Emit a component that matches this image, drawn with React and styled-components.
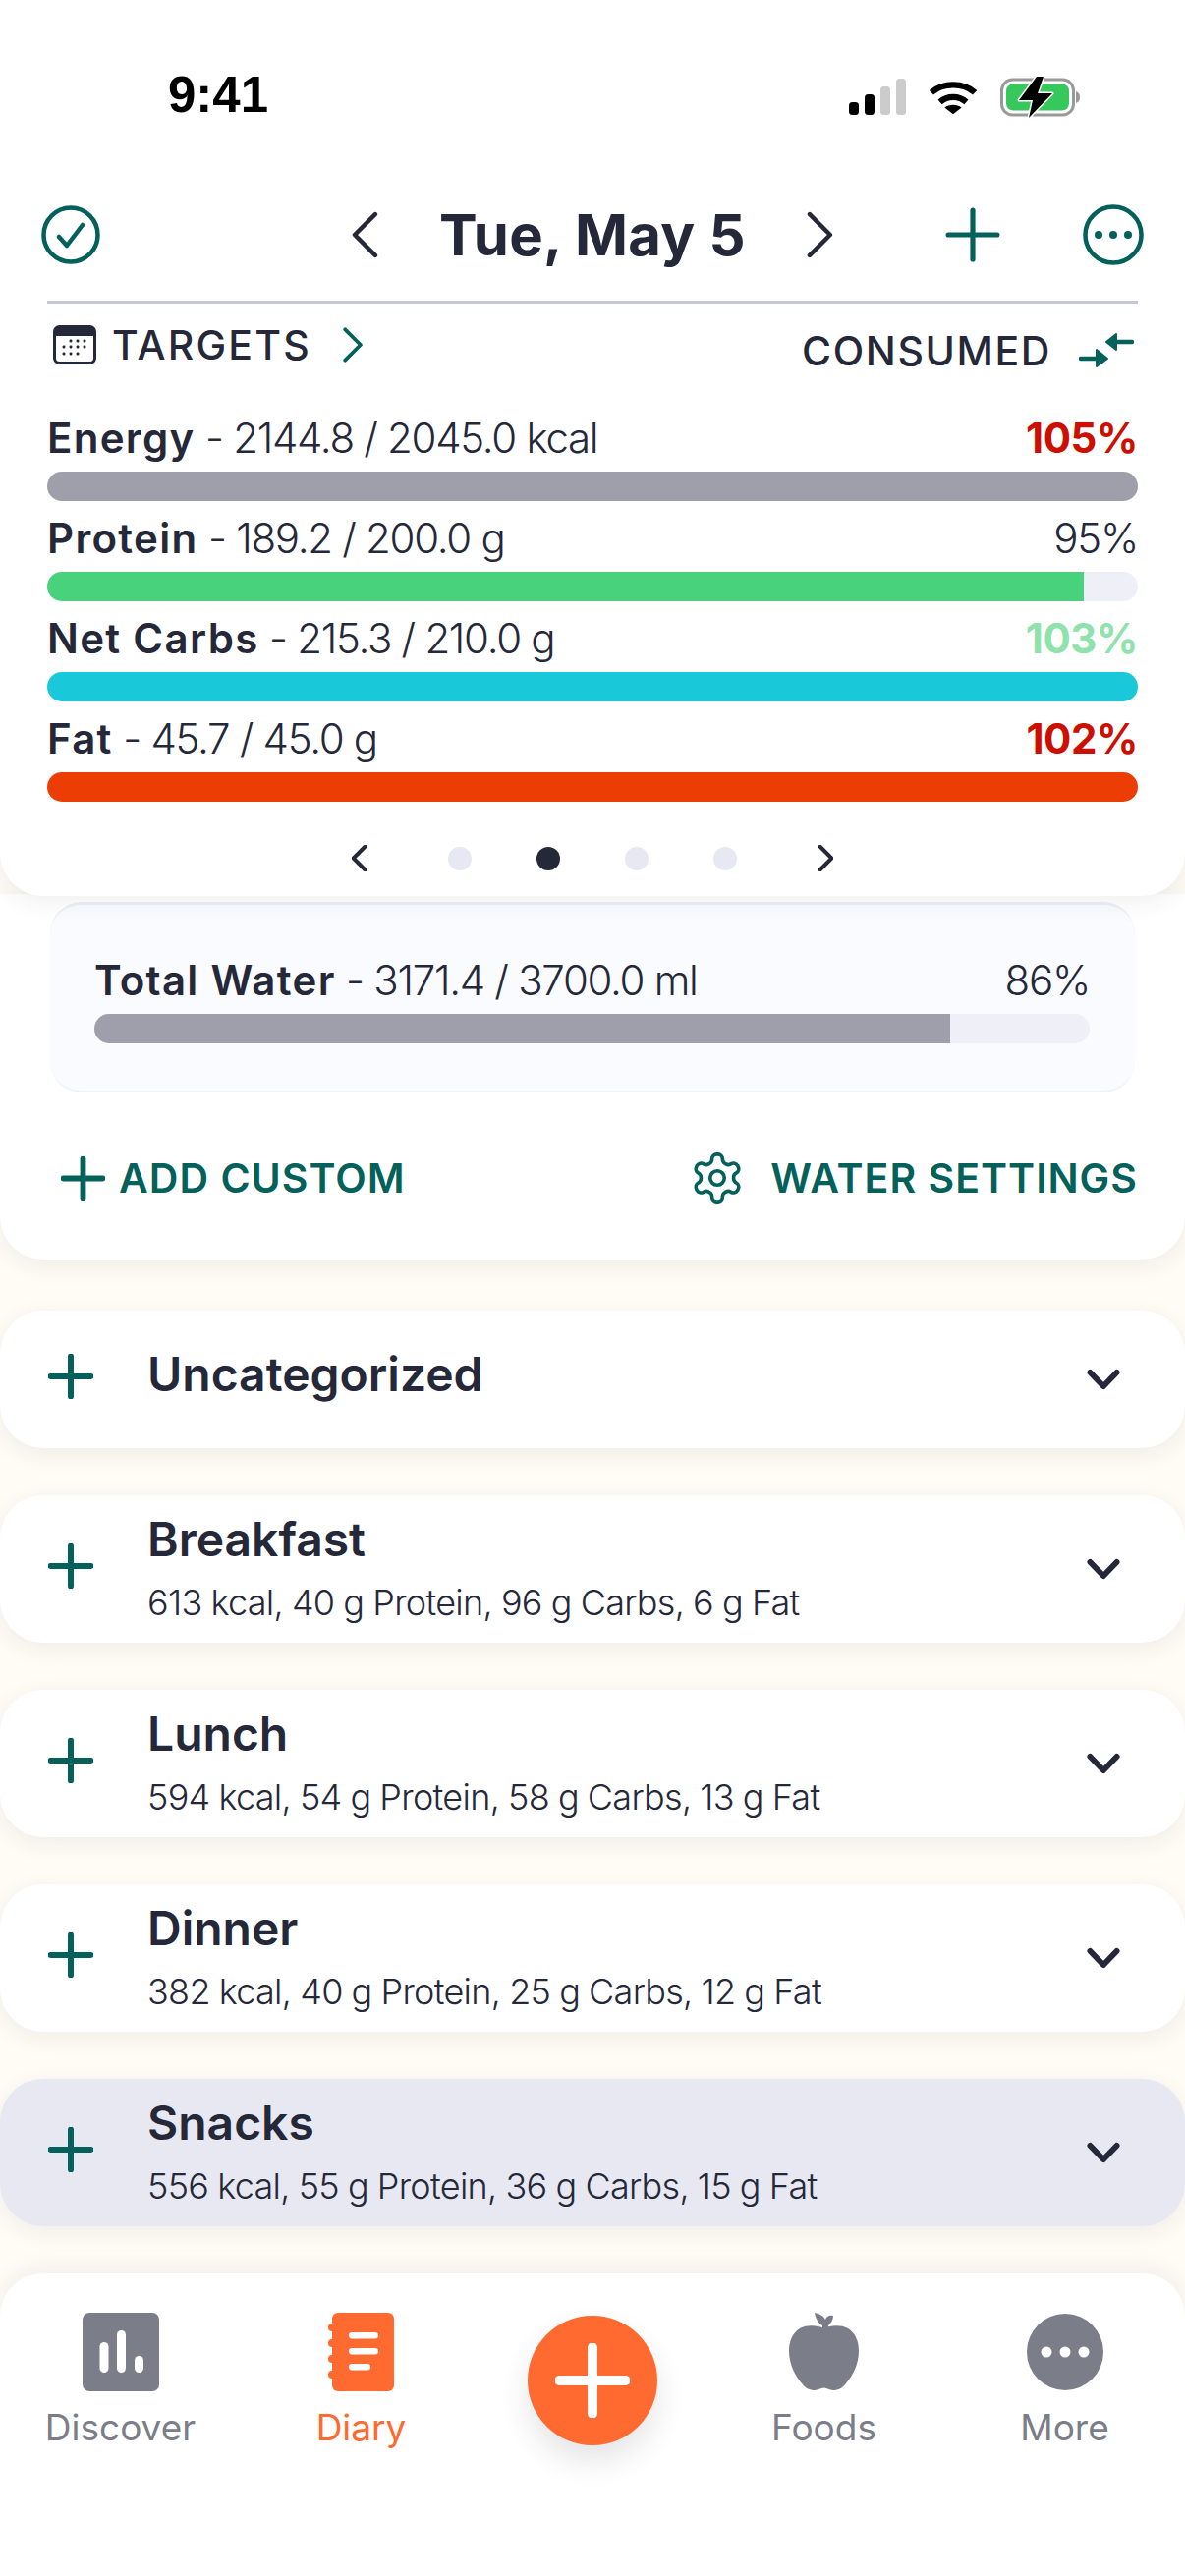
import React from "react";
import styled, { createGlobalStyle } from "styled-components";

const INK = "#252839";
const TEAL = "#03605a";
const GREY = "#7b7d89";
const ORANGE = "#ff6a30";

const Global = createGlobalStyle`
  * { box-sizing: border-box; }
  html, body { margin: 0; padding: 0; background: #fff; }
  body { font-family: Inter, "Noto Sans", sans-serif; color: ${INK}; }
`;

const Phone = styled.div`
  width: 1206px;
  height: 2622px;
  overflow: hidden;
  display: flex;
  flex-direction: column;
  background: #fffcf6;
`;

const Sheet = styled.div`
  background: #fff;
  border-radius: 0 0 44px 44px;
  box-shadow: 0 6px 24px rgba(40, 40, 60, 0.07);
`;

const TopCard = styled(Sheet)`
  padding: 0 48px;
  height: 912px;
  position: relative;
  z-index: 2;
`;

const StatusBar = styled.div`
  height: 190px;
  display: flex;
  justify-content: space-between;
  align-items: flex-start;
  padding-top: 67px;
`;

const Clock = styled.div`
  font-family: "Liberation Sans", sans-serif;
  font-weight: 700;
  font-size: 51px;
  line-height: 60px;
  color: #000;
  margin-left: 123px;
`;

const StatusIcons = styled.div`
  display: flex;
  align-items: center;
  gap: 23px;
  margin: 11px 58px 0 0;
`;

const Header = styled.div`
  height: 116px;
  margin: 0 -6px;
  padding-bottom: 18px;
  display: grid;
  grid-template-columns: 1fr auto 1fr;
  align-items: center;
`;

const HeaderSide = styled.div`
  display: flex;
  align-items: center;
  justify-content: ${(p) => (p.$end ? "flex-end" : "flex-start")};
  gap: 84px;
`;

const DateNav = styled.div`
  display: flex;
  align-items: center;
  gap: 62px;
`;

const DateText = styled.div`
  font-size: 58px;
  font-weight: 700;
  line-height: 64px;
  letter-spacing: 0.3px;
  white-space: nowrap;
`;

const Rule = styled.div`
  height: 3px;
  background: #c6c6d6;
`;

const TargetRow = styled.div`
  height: 70px;
  display: flex;
  justify-content: space-between;
  align-items: flex-start;
`;

const RowGroup = styled.div`
  display: flex;
  align-items: center;
  gap: ${(p) => p.$gap || 14}px;
  margin-top: ${(p) => p.$top || 0}px;
  padding: 0 ${(p) => p.$right || 0}px 0 ${(p) => p.$left || 0}px;
`;

const Caps = styled.span`
  font-size: 41px;
  font-weight: 500;
  line-height: 48px;
  letter-spacing: ${(p) => (p.$wide ? 2.2 : 1.6)}px;
`;

const Metrics = styled.div`
  display: flex;
  flex-direction: column;
  margin-top: 43px;
`;

const Metric = styled.div`
  height: 102px;
`;

const MetricHead = styled.div`
  display: flex;
  justify-content: space-between;
  height: 48px;
  font-size: 42px;
  line-height: 48px;
  font-weight: 300;
  letter-spacing: -1.3px;
  margin-bottom: 10px;
  white-space: nowrap;
  b { font-weight: 600; letter-spacing: 1.3px; }
`;

const Percent = styled.span`
  color: ${(p) => p.$color || INK};
  font-weight: ${(p) => (p.$color ? 700 : 300)};
  letter-spacing: ${(p) => (p.$color ? "-0.5px" : "-1.3px")};
`;

const Track = styled.div`
  height: 30px;
  border-radius: 15px;
  background: #eeeff7;
  overflow: hidden;
`;

const Fill = styled.div`
  height: 100%;
  background: ${(p) => p.$color};
`;

const Pager = styled.div`
  display: flex;
  justify-content: center;
  align-items: center;
  margin-top: 30px;
  gap: 83px;
`;

const PagerDots = styled.div`
  display: flex;
  align-items: center;
  gap: 66px;
`;

const Dot = styled.span`
  width: 24px;
  height: 24px;
  border-radius: 50%;
  background: ${(p) => (p.$active ? INK : "#e7e8f1")};
`;

const WaterSheet = styled(Sheet)`
  margin-top: -2px;
  height: 372px;
  padding: 8px 48px 0;
  display: flex;
  flex-direction: column;
`;

const WaterCard = styled.div`
  height: 194px;
  margin: 0 3px;
  padding: 53px 46px 0 45px;
  border-radius: 32px;
  background: #fafbff;
  border-top: 3px solid #eeeff6;
  border-bottom: 2px solid #f0f1f6;
`;

const ActionRow = styled.div`
  display: flex;
  justify-content: space-between;
  align-items: center;
  margin-top: 58px;
  color: ${TEAL};
`;

const ActionText = styled.span`
  font-size: 41px;
  font-weight: 600;
  line-height: 48px;
  letter-spacing: 1px;
  white-space: nowrap;
`;

const Meals = styled.div`
  display: flex;
  flex-direction: column;
  gap: 48px;
  margin-top: 52px;
`;

const MealRow = styled(Sheet)`
  height: ${(p) => (p.$tall ? 140 : 150)}px;
  border-radius: 44px;
  display: flex;
  align-items: center;
  padding: 0 66px 0 49px;
  background: ${(p) => (p.$selected ? "#e7e8f1" : "#fff")};
`;

const PlusSlot = styled.div`
  display: flex;
  margin-bottom: 6px;
`;

const MealText = styled.div`
  flex: 1;
  margin-left: 55px;
  padding-bottom: ${(p) => (p.$single ? 10 : 3)}px;
`;

const MealTitle = styled.div`
  font-size: 48px;
  font-weight: 600;
  line-height: 58px;
`;

const MealInfo = styled.div`
  font-size: 36px;
  font-weight: 300;
  line-height: 44px;
  letter-spacing: -0.7px;
  word-spacing: -0.5px;
  margin-top: 13px;
  white-space: nowrap;
`;

const TabBar = styled.div`
  margin-top: 48px;
  flex: 1;
  background: #fff;
  border-radius: 44px 44px 0 0;
  box-shadow: 0 -6px 24px rgba(40, 40, 60, 0.06);
  display: grid;
  grid-template-columns: 245px 245px 226px 245px 245px;
  padding-top: 40px;
`;

const Tab = styled.div`
  display: flex;
  flex-direction: column;
  align-items: center;
  height: 170px;
  color: ${(p) => (p.$active ? ORANGE : GREY)};
`;

const TabIcon = styled.div`
  height: 80px;
  display: flex;
  align-items: center;
  justify-content: center;
`;

const TabLabel = styled.span`
  font-size: 37px;
  line-height: 44px;
  font-weight: 400;
  margin-top: 15px;
`;

const Fab = styled.div`
  width: 132px;
  height: 132px;
  margin: 3px auto 0;
  border-radius: 50%;
  background: ${ORANGE};
  display: flex;
  align-items: center;
  justify-content: center;
  box-shadow: 0 16px 30px rgba(40, 40, 60, 0.12);
`;

const Chevron = ({ dir = "right", size = 48, color = INK, sw = 5 }) => (
  <svg width={size * 0.56} height={size} viewBox="0 0 27 48" fill="none" stroke={color} strokeWidth={sw} strokeLinecap="round" strokeLinejoin="round">
    <path d={dir === "right" ? "M3 3 L24 24 L3 45" : "M24 3 L3 24 L24 45"} />
  </svg>
);

const DownChevron = () => (
  <svg width="34" height="22" viewBox="0 0 34 22" fill="none" stroke={INK} strokeWidth="6" strokeLinecap="round" strokeLinejoin="round">
    <path d="M3.5 4 L17 18 L30.5 4" />
  </svg>
);

const Plus = ({ size = 54, color = TEAL, sw = 5 }) => (
  <svg width={size} height={size} viewBox="0 0 54 54" stroke={color} strokeWidth={sw} strokeLinecap="round">
    <path d="M27 3 V51 M3 27 H51" />
  </svg>
);

const CheckCircle = () => (
  <svg width="60" height="60" viewBox="0 0 60 60" fill="none" stroke={TEAL} strokeWidth="4.5" strokeLinecap="round" strokeLinejoin="round">
    <circle cx="30" cy="30" r="27.5" />
    <path d="M18 32 L26 41 L42 20" />
  </svg>
);

const MoreCircle = () => (
  <svg width="62" height="62" viewBox="0 0 62 62" fill="none">
    <circle cx="31" cy="31" r="28.5" stroke={TEAL} strokeWidth="4.5" />
    <circle cx="16" cy="31" r="4" fill={TEAL} />
    <circle cx="31" cy="31" r="4" fill={TEAL} />
    <circle cx="46" cy="31" r="4" fill={TEAL} />
  </svg>
);

const CalendarIcon = () => (
  <svg width="44" height="40" viewBox="0 0 44 40">
    <rect x="1.5" y="1.5" width="41" height="37" rx="5" fill="#fff" stroke={INK} strokeWidth="3" />
    <path d="M1.5 6 a4 4 0 0 1 4-4 h33 a4 4 0 0 1 4 4 v5 h-41 z" fill={INK} />
    {[[18, 16], [25, 16], [32, 16], [11, 22], [18, 22], [25, 22], [32, 22], [11, 29], [18, 29], [25, 29]].map(([x, y]) => (
      <rect key={`${x}-${y}`} x={x - 1.4} y={y - 1.4} width="2.8" height="2.8" rx="1" fill={INK} />
    ))}
  </svg>
);

const SwapIcon = () => (
  <svg width="56" height="36" viewBox="0 0 56 36" fill={TEAL} stroke={TEAL} strokeLinecap="round" strokeLinejoin="round">
    <path d="M2 26 H20 M37 9 H54" fill="none" strokeWidth="4.5" />
    <path d="M18 17 L29 26 L18 34 Z M38 1 L28 9 L38 17 Z" strokeWidth="2" />
  </svg>
);

const GearIcon = () => (
  <svg width="58" height="58" viewBox="0 0 24 24" fill="none" stroke={TEAL} strokeWidth="1.5" strokeLinecap="round" strokeLinejoin="round">
    <path d="M12.22 2h-.44a2 2 0 0 0-2 2v.18a2 2 0 0 1-1 1.73l-.43.25a2 2 0 0 1-2 0l-.15-.08a2 2 0 0 0-2.73.73l-.22.38a2 2 0 0 0 .73 2.73l.15.1a2 2 0 0 1 1 1.72v.51a2 2 0 0 1-1 1.74l-.15.09a2 2 0 0 0-.73 2.73l.22.38a2 2 0 0 0 2.73.73l.15-.08a2 2 0 0 1 2 0l.43.25a2 2 0 0 1 1 1.73V20a2 2 0 0 0 2 2h.44a2 2 0 0 0 2-2v-.18a2 2 0 0 1 1-1.73l.43-.25a2 2 0 0 1 2 0l.15.08a2 2 0 0 0 2.73-.73l.22-.39a2 2 0 0 0-.73-2.73l-.15-.08a2 2 0 0 1-1-1.74v-.5a2 2 0 0 1 1-1.74l.15-.09a2 2 0 0 0 .73-2.73l-.22-.38a2 2 0 0 0-2.73-.73l-.15.08a2 2 0 0 1-2 0l-.43-.25a2 2 0 0 1-1-1.73V4a2 2 0 0 0-2-2z" />
    <circle cx="12" cy="12" r="3" />
  </svg>
);

const SignalIcons = () => (
  <>
    <svg width="58" height="38" viewBox="0 0 58 38">
      <rect x="0" y="24" width="10" height="13" rx="3.5" fill="#000" />
      <rect x="16" y="16" width="10" height="21" rx="3.5" fill="#000" />
      <rect x="32" y="8" width="10" height="29" rx="3.5" fill="#ccc" />
      <rect x="48" y="0" width="10" height="37" rx="3.5" fill="#ccc" />
    </svg>
    <svg width="50" height="38" viewBox="0 0 52 38" fill="none" stroke="#000" strokeWidth="6.5">
      <path d="M3 14 C15 3 37 3 49 14" />
      <path d="M12 24 C20 17 32 17 40 24" />
      <path d="M26 37 L17 30 C22 26 30 26 35 30 Z" fill="#000" stroke="none" />
    </svg>
    <svg width="82" height="42" viewBox="0 0 82 42">
      <rect x="1.5" y="3" width="73" height="36" rx="11" fill="none" stroke="#999" strokeWidth="3" />
      <rect x="6" y="7.5" width="64" height="27" rx="7" fill="#37c85c" />
      <path d="M77 15 c3 1 4 3 4 6 s-1 5-4 6 z" fill="#999" />
      <path d="M37 0 L19 24 H33 L29 42 L53 17 H38 L44 0 Z" fill="#000" stroke="#fff" strokeWidth="3" paintOrder="stroke" strokeLinejoin="round" />
    </svg>
  </>
);

const BarsTab = () => (
  <svg width="78" height="80" viewBox="0 0 78 80">
    <rect width="78" height="80" rx="7" fill={GREY} />
    <g fill="#fff">
      <rect x="17.5" y="30" width="9" height="31" rx="4.5" />
      <rect x="35" y="18" width="9" height="43" rx="4.5" />
      <rect x="53" y="44" width="9" height="17" rx="4.5" />
    </g>
  </svg>
);

const DiaryTab = () => (
  <svg width="67" height="80" viewBox="0 0 67 80">
    <rect x="4" width="63" height="80" rx="6" fill={ORANGE} />
    <g fill={ORANGE}>
      <circle cx="4" cy="15" r="4" />
      <circle cx="4" cy="31" r="4" />
      <circle cx="4" cy="47" r="4" />
      <circle cx="4" cy="63" r="4" />
    </g>
    <g fill="#fff">
      <rect x="21" y="20" width="30" height="6.5" rx="3.2" />
      <rect x="21" y="36" width="30" height="6.5" rx="3.2" />
      <rect x="21" y="52" width="22" height="6.5" rx="3.2" />
    </g>
  </svg>
);

const AppleTab = () => (
  <svg width="71" height="80" viewBox="0 0 71 80" fill={GREY}>
    <path d="M35.5 16 C42 13 52 12 60 16 C68 21 71 30 71 39 C71 52 65 64 58 72 C54 77 50 79 45 79 C41 79 39 76.5 35.5 76.5 C32 76.5 30 79 26 79 C21 79 17 77 13 72 C6 64 0 52 0 39 C0 30 3 21 11 16 C19 12 29 13 35.5 16 Z" />
    <path d="M26 0 C31 1 35 3 37 7 C38 4 41 2 45 3 C45 8 42 11 40 13 V17 H34 V13 C30 11 27 6 26 0 Z" />
  </svg>
);

const MoreTab = () => (
  <svg width="78" height="80" viewBox="0 0 78 80">
    <circle cx="39" cy="40" r="39" fill={GREY} />
    <circle cx="20" cy="40" r="5.5" fill="#fff" />
    <circle cx="39" cy="40" r="5.5" fill="#fff" />
    <circle cx="58" cy="40" r="5.5" fill="#fff" />
  </svg>
);

const metrics = [
  { name: "Energy", detail: "2144.8 / 2045.0 kcal", pct: 105, color: "#9e9faa", pctColor: "#cc0f00" },
  { name: "Protein", detail: "189.2 / 200.0 g", pct: 95, color: "#47d27b" },
  { name: "Net Carbs", detail: "215.3 / 210.0 g", pct: 103, color: "#19c9d9", pctColor: "#8fe2ac" },
  { name: "Fat", detail: "45.7 / 45.0 g", pct: 102, color: "#ec3d04", pctColor: "#cc0f00" },
];

const meals = [
  { name: "Breakfast", info: "613 kcal, 40 g Protein, 96 g Carbs, 6 g Fat" },
  { name: "Lunch", info: "594 kcal, 54 g Protein, 58 g Carbs, 13 g Fat" },
  { name: "Dinner", info: "382 kcal, 40 g Protein, 25 g Carbs, 12 g Fat" },
  { name: "Snacks", info: "556 kcal, 55 g Protein, 36 g Carbs, 15 g Fat", selected: true },
];

const MetricRow = ({ name, detail, pct, color, pctColor }) => (
  <Metric>
    <MetricHead>
      <span><b>{name}</b> - {detail}</span>
      <Percent $color={pctColor}>{pct}%</Percent>
    </MetricHead>
    <Track>
      <Fill $color={color} style={{ width: `${Math.min(pct, 100)}%` }} />
    </Track>
  </Metric>
);

export default function App() {
  return (
    <Phone>
      <Global />
      <TopCard>
        <StatusBar>
          <Clock>9:41</Clock>
          <StatusIcons><SignalIcons /></StatusIcons>
        </StatusBar>
        <Header>
          <HeaderSide><CheckCircle /></HeaderSide>
          <DateNav>
            <Chevron dir="left" size={48} sw={4.5} />
            <DateText>Tue, May 5</DateText>
            <Chevron size={48} sw={4.5} />
          </DateNav>
          <HeaderSide $end>
            <Plus size={56} />
            <MoreCircle />
          </HeaderSide>
        </Header>
        <Rule />
        <TargetRow>
          <RowGroup $left={6} $top={18} $gap={16}>
            <CalendarIcon />
            <Caps $wide>TARGETS</Caps>
            <RowGroup $left={16}><Chevron size={36} color={TEAL} sw={5} /></RowGroup>
          </RowGroup>
          <RowGroup $gap={28} $top={24} $right={4}>
            <Caps>CONSUMED</Caps>
            <SwapIcon />
          </RowGroup>
        </TargetRow>
        <Metrics>
          {metrics.map((m) => <MetricRow key={m.name} {...m} />)}
        </Metrics>
        <Pager>
          <Chevron dir="left" size={27} sw={7} />
          <PagerDots>
            <Dot /><Dot $active /><Dot /><Dot />
          </PagerDots>
          <Chevron size={27} sw={7} />
        </Pager>
      </TopCard>
      <WaterSheet>
        <WaterCard>
          <MetricRow name="Total Water" detail="3171.4 / 3700.0 ml" pct={86} color="#9e9faa" />
        </WaterCard>
        <ActionRow>
          <RowGroup $gap={14} $left={14}>
            <Plus size={45} sw={7} />
            <ActionText>ADD CUSTOM</ActionText>
          </RowGroup>
          <RowGroup $gap={25}>
            <GearIcon />
            <ActionText>WATER SETTINGS</ActionText>
          </RowGroup>
        </ActionRow>
      </WaterSheet>
      <Meals>
        <MealRow $tall>
          <PlusSlot><Plus size={46} sw={7} /></PlusSlot>
          <MealText $single><MealTitle>Uncategorized</MealTitle></MealText>
          <DownChevron />
        </MealRow>
        {meals.map((m) => (
          <MealRow key={m.name} $selected={m.selected}>
            <PlusSlot><Plus size={46} sw={7} /></PlusSlot>
            <MealText>
              <MealTitle>{m.name}</MealTitle>
              <MealInfo>{m.info}</MealInfo>
            </MealText>
            <DownChevron />
          </MealRow>
        ))}
      </Meals>
      <TabBar>
        <Tab><TabIcon><BarsTab /></TabIcon><TabLabel>Discover</TabLabel></Tab>
        <Tab $active><TabIcon><DiaryTab /></TabIcon><TabLabel>Diary</TabLabel></Tab>
        <div><Fab><Plus size={76} color="#fff" sw={7} /></Fab></div>
        <Tab><TabIcon><AppleTab /></TabIcon><TabLabel>Foods</TabLabel></Tab>
        <Tab><TabIcon><MoreTab /></TabIcon><TabLabel>More</TabLabel></Tab>
      </TabBar>
    </Phone>
  );
}
